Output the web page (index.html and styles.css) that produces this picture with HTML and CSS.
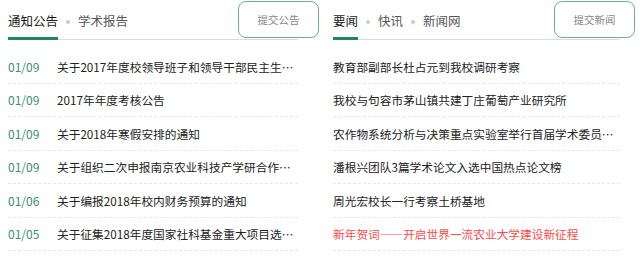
FILE: index.html
```html
<!DOCTYPE html>
<html lang="zh-CN">
<head>
    <meta charset="UTF-8">
    <title>通知公告</title>
    <link rel="stylesheet" href="styles.css">
</head>
<body>
    <div class="wrap">
        <div class="panel panel-left">
            <div class="panel-head">
                <div class="tabs">
                    <span class="tab active">通知公告</span>
                    <span class="dot"></span>
                    <span class="tab">学术报告</span>
                </div>
                <button class="submit-btn">提交公告</button>
            </div>
            <ul class="list">
                <li><span class="date">01/09</span><span class="title">关于2017年度校领导班子和领导干部民主生活会的通知</span></li>
                <li><span class="date">01/09</span><span class="title">2017年年度考核公告</span></li>
                <li><span class="date">01/09</span><span class="title">关于2018年寒假安排的通知</span></li>
                <li><span class="date">01/09</span><span class="title">关于组织二次申报南京农业科技产学研合作项目的通知</span></li>
                <li><span class="date">01/06</span><span class="title">关于编报2018年校内财务预算的通知</span></li>
                <li><span class="date">01/05</span><span class="title">关于征集2018年度国家社科基金重大项目选题的通知</span></li>
            </ul>
        </div>

        <div class="panel panel-right">
            <div class="panel-head">
                <div class="tabs">
                    <span class="tab active">要闻</span>
                    <span class="dot"></span>
                    <span class="tab">快讯</span>
                    <span class="dot"></span>
                    <span class="tab">新闻网</span>
                </div>
                <button class="submit-btn">提交新闻</button>
            </div>
            <ul class="list">
                <li><span class="title">教育部副部长杜占元到我校调研考察</span></li>
                <li><span class="title">我校与句容市茅山镇共建丁庄葡萄产业研究所</span></li>
                <li><span class="title">农作物系统分析与决策重点实验室举行首届学术委员会会议</span></li>
                <li><span class="title">潘根兴团队3篇学术论文入选中国热点论文榜</span></li>
                <li><span class="title">周光宏校长一行考察土桥基地</span></li>
                <li><span class="title hot">新年贺词——开启世界一流农业大学建设新征程</span></li>
            </ul>
        </div>
    </div>
</body>
</html>
```

FILE: styles.css
```css
body {
    margin: 0;
    font-family: "Noto Sans CJK SC", "Liberation Sans", sans-serif;
    color: #333;
    background: #fff;
}

.wrap {
    display: grid;
    grid-template-columns: 290px 287px;
    column-gap: 35px;
    padding-left: 8px;
}

.panel-head {
    display: flex;
    justify-content: space-between;
    height: 40px;
    box-sizing: border-box;
    border-bottom: 1px solid #dcdcdc;
}

.tabs {
    display: flex;
    align-items: stretch;
}

.tab {
    display: flex;
    align-items: center;
    box-sizing: border-box;
    height: 40px;
    padding-top: 4px;
    border-bottom: 3px solid transparent;
    font-size: 12.5px;
    color: #555;
}

.tab.active {
    color: #1a1a1a;
    border-bottom-color: #1b8a5c;
}

.dot {
    width: 4px;
    height: 4px;
    border-radius: 50%;
    background: #ccc;
    align-self: center;
    margin: 4px 8px 0 8px;
}

.submit-btn {
    width: 81px;
    height: 37px;
    margin-top: 1px;
    border: 1px solid #6ab684;
    border-radius: 8px;
    background: #fff;
    font-family: inherit;
    font-size: 10.5px;
    color: #888;
    padding: 0;
}

.panel-left .submit-btn {
    margin-right: -21px;
}

.panel-right .submit-btn {
    margin-right: -15px;
}

.list {
    list-style: none;
    margin: 10px 0 0 0;
    padding: 0;
}

.list li {
    display: flex;
    height: 33.5px;
    box-sizing: border-box;
    align-items: center;
    border-bottom: 1px dashed #e6e6e6;
    font-size: 11.7px;
}

.date {
    flex: 0 0 49px;
    font-size: 12px;
    color: #3c8f70;
}

.title {
    flex: 1;
    min-width: 0;
    white-space: nowrap;
    overflow: hidden;
    text-overflow: ellipsis;
    color: #222;
}

.title.hot {
    color: #ff4a4a;
}
```
